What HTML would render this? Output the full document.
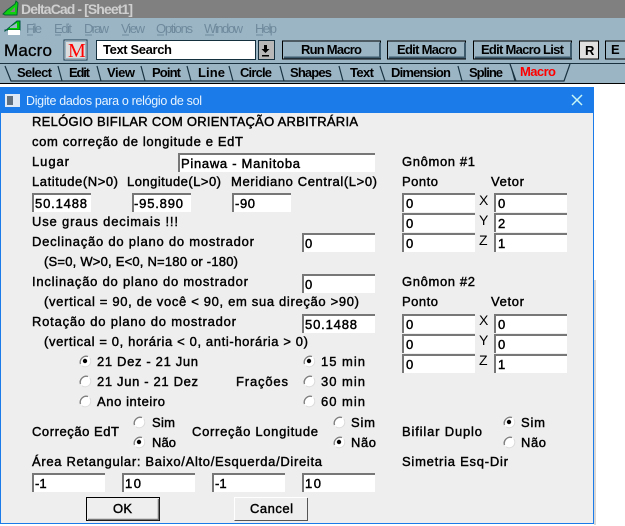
<!DOCTYPE html>
<html><head><meta charset="utf-8"><style>
html,body{margin:0;padding:0;background:#fff;width:625px;height:526px;overflow:hidden}
svg{display:block}
text{font-family:"Liberation Sans",sans-serif;font-size:13px;fill:#000;stroke:#000;stroke-width:.42;white-space:pre}
.n{stroke:none}
.m{fill:#6f8a9c;stroke:none;font-size:13px}
.b{font-weight:bold;stroke:none;font-size:13px}
.in{stroke-width:.45}
</style></head><body>
<svg width="625" height="526" viewBox="0 0 625 526" xmlns="http://www.w3.org/2000/svg">
<defs>
<g id="ri"><circle r="5.5" fill="#fff"/><path d="M-4.500 3A6 6 0 0 1 3-4.500" fill="none" stroke="#808080" stroke-width="1.400"/><path d="M-3 4.800A5.600 5.600 0 0 0 4.800-3" fill="none" stroke="#dcdcdc" stroke-width="1"/></g>
<g id="rc"><use href="#ri"/><circle r="2.200" fill="#000"/></g>
</defs>
<rect width="625" height="18" fill="#808080"/>
<rect y="18" width="625" height="65" fill="#9bb5c5"/>

<path d="M3 14L7 10L15 4L16 1L18 3L17 15H5z" fill="#0fd00f" stroke="#063" stroke-width="1"/>
<path d="M10 12L15 7V12z" fill="#808080"/>
<text x="21" y="14" textLength="112" class="b" style="fill:#cfcfcf;font-size:14px">DeltaCad - [Sheet1]</text>

<path d="M5 31L17 21H20V30H5z" fill="#0c0" stroke="#054" stroke-width="1"/>
<path d="M10 27L17 23V28H10z" fill="#9bb5c5"/>
<rect x="8" y="30" width="12" height="5" fill="#fff"/>
<text x="26" y="33" textLength="16" class="m">File</text>
<text x="54" y="33" textLength="18" class="m">Edit</text>
<text x="84" y="33" textLength="25" class="m">Draw</text>
<text x="121" y="33" textLength="24" class="m">View</text>
<text x="156" y="33" textLength="37" class="m">Options</text>
<text x="204" y="33" textLength="39" class="m">Window</text>
<text x="255" y="33" textLength="22" class="m">Help</text>
<path d="M27 35h6M55 35h6M85 35h7M122 35h7M157 35h7M205 35h9M256 35h7" stroke="#6f8a9c" stroke-width="1"/>

<text x="4" y="56" textLength="48" style="font-size:17px;stroke-width:.3">Macro</text>
<rect x="64" y="40" width="23" height="20" fill="#e8e8e8" stroke="#1a3c50" stroke-width="1"/>
<rect x="65.500" y="41.500" width="20" height="17" fill="#ddd" stroke="#9bb5c5" stroke-width="1"/>
<text x="68" y="57" textLength="16" style="font-family:'Liberation Serif',serif;font-size:20px;fill:#f00;stroke:none">M</text>
<rect x="96.500" y="40.500" width="159" height="19" fill="#fff" stroke="#14303f"/>
<text x="103" y="54" textLength="69" class="b">Text Search</text>
<rect x="258.500" y="40.500" width="16" height="19" fill="#b8b8b8" stroke="#14303f"/>
<path d="M264 45h3v4h2.500l-4 4-4-4H264zM262 55h7v1.500h-7z" fill="#000"/>

<g fill="#9bb5c5" stroke="#000">
<rect x="282.500" y="41" width="98" height="18"/>
<rect x="387.500" y="41" width="78" height="18"/>
<rect x="473.500" y="41" width="98" height="18"/>
<rect x="605.500" y="41" width="25" height="18"/>
</g>
<path d="M284 57.500H380V42.500M389 57.500H465V42.500M475 57.500H571V42.500" fill="none" stroke="#3d5a6c" stroke-width="2"/>
<rect x="579.500" y="41" width="19" height="18" fill="#e0e0e0" stroke="#000"/>
<text x="301" y="54" textLength="61" class="b">Run Macro</text>
<text x="397" y="54" textLength="60" class="b">Edit Macro</text>
<text x="481" y="54" textLength="83" class="b">Edit Macro List</text>
<text x="585" y="55" textLength="9" class="b">R</text>
<text x="611" y="54" textLength="8" class="b">E</text>

<rect y="63" width="625" height="1" fill="#1a3240"/>
<path d="M5 66L11 81H62L58 66M97 66L101 81H62M141 66L145 81H101M187 66L191 81H145M229 66L233 81H191M280 66L284 81H233M339 66L343 81H284M380 66L385 81H343M458 66L462 81H385M511 66L515 81H462" fill="none" stroke="#1a3240" stroke-width="1.200"/>
<path d="M510 64H570L564 81H516z" fill="#9bb5c5"/>
<path d="M510 64L516 81H564L570 64" fill="none" stroke="#1a3240" stroke-width="1.200"/>
<text x="17" y="77" textLength="35" class="b">Select</text>
<text x="69" y="77" textLength="21" class="b">Edit</text>
<text x="107" y="77" textLength="28" class="b">View</text>
<text x="152" y="77" textLength="29" class="b">Point</text>
<text x="198" y="77" textLength="27" class="b">Line</text>
<text x="240" y="77" textLength="32" class="b">Circle</text>
<text x="290" y="77" textLength="42" class="b">Shapes</text>
<text x="350" y="77" textLength="24" class="b">Text</text>
<text x="391" y="77" textLength="60" class="b">Dimension</text>
<text x="469" y="77" textLength="34" class="b">Spline</text>
<text x="520" y="76" textLength="36" class="b" style="fill:#f00">Macro</text>
<rect y="83" width="625" height="1" fill="#000"/>
<rect y="84" width="625" height="3" fill="#fff"/>

<rect x="594" y="280" width="2" height="245" fill="#d8d8d8"/>
<rect x="0" y="87" width="593.500" height="437" fill="#eee"/>
<rect x="0" y="87" width="594" height="26" fill="#1b7be8"/>
<path d="M.5 113V523.500H593.500V113" fill="none" stroke="#1b7be8"/>
<rect x="5" y="94" width="15" height="13" fill="#dfe9f5"/>
<rect x="7" y="96" width="6" height="9" fill="#60707f"/>
<text x="26" y="105" textLength="176" class="n" style="fill:#e8f4ff;font-size:12.500px">Digite dados para o relógio de sol</text>
<path d="M572 95L582 105M582 95L572 105" stroke="#c8f5f5" stroke-width="1.500"/>

<text x="32" y="126" textLength="326">RELÓGIO BIFILAR COM ORIENTAÇÃO ARBITRÁRIA</text>
<text x="32" y="146" textLength="211">com correção de longitude e EdT</text>
<text x="32" y="166" textLength="37">Lugar</text>
<text x="32" y="186" textLength="86">Latitude(N&gt;0)</text>
<text x="127" y="186" textLength="94">Longitude(L&gt;0)</text>
<text x="231" y="186" textLength="146">Meridiano Central(L&gt;0)</text>
<text x="32" y="226" textLength="146">Use graus decimais !!!</text>
<text x="32" y="246" textLength="222">Declinação do plano do mostrador</text>
<text x="44" y="266" textLength="194">(S=0, W&gt;0, E&lt;0, N=180 or -180)</text>
<text x="32" y="286" textLength="216">Inclinação do plano do mostrador</text>
<text x="44" y="306" textLength="315">(vertical = 90, de você &lt; 90, em sua direção &gt;90)</text>
<text x="32" y="326" textLength="204">Rotação do plano do mostrador</text>
<text x="44" y="346" textLength="264">(vertical = 0, horária &lt; 0, anti-horária &gt; 0)</text>
<text x="97" y="366" textLength="101">21 Dez - 21 Jun</text>
<text x="97" y="386" textLength="101">21 Jun - 21 Dez</text>
<text x="97" y="406" textLength="68">Ano inteiro</text>
<text x="236" y="386" textLength="52">Frações</text>
<text x="321" y="366" textLength="44">15 min</text>
<text x="321" y="386" textLength="44">30 min</text>
<text x="321" y="406" textLength="44">60 min</text>
<text x="32" y="436" textLength="87">Correção EdT</text>
<text x="152" y="427" textLength="23">Sim</text>
<text x="152" y="447" textLength="24">Não</text>
<text x="192" y="436" textLength="126">Correção Longitude</text>
<text x="351" y="427" textLength="24">Sim</text>
<text x="351" y="447" textLength="25">Não</text>
<text x="402" y="436" textLength="80">Bifilar Duplo</text>
<text x="521" y="427" textLength="24">Sim</text>
<text x="521" y="447" textLength="25">Não</text>
<text x="32" y="466" textLength="290">Área Retangular: Baixo/Alto/Esquerda/Direita</text>
<text x="402" y="466" textLength="106">Simetria Esq-Dir</text>
<text x="402" y="166" textLength="73">Gnômon #1</text>
<text x="402" y="186" textLength="36">Ponto</text>
<text x="491" y="186" textLength="33">Vetor</text>
<text x="402" y="286" textLength="73">Gnômon #2</text>
<text x="402" y="306" textLength="36">Ponto</text>
<text x="491" y="306" textLength="33">Vetor</text>
<text x="479" y="205" class="n" style="font-size:14px">X</text>
<text x="479" y="225" class="n" style="font-size:14px">Y</text>
<text x="479" y="245" class="n" style="font-size:14px">Z</text>
<text x="479" y="325" class="n" style="font-size:14px">X</text>
<text x="479" y="345" class="n" style="font-size:14px">Y</text>
<text x="479" y="365" class="n" style="font-size:14px">Z</text>

<use href="#rc" x="85" y="361"/><use href="#ri" x="85" y="381"/><use href="#ri" x="85" y="401"/>
<use href="#rc" x="309" y="361"/><use href="#ri" x="309" y="381"/><use href="#ri" x="309" y="401"/>
<use href="#ri" x="139" y="422"/><use href="#rc" x="139" y="442"/>
<use href="#ri" x="339" y="422"/><use href="#rc" x="339" y="442"/>
<use href="#rc" x="509" y="422"/><use href="#ri" x="509" y="442"/>

<g fill="#fff">
<rect x="32" y="193" width="59" height="19"/><rect x="132" y="193" width="59" height="19"/><rect x="232" y="193" width="59" height="19"/>
<rect x="178" y="153" width="197" height="19"/>
<rect x="302" y="233" width="73" height="19"/><rect x="302" y="274" width="73" height="19"/><rect x="302" y="314" width="73" height="19"/>
<rect x="402" y="193" width="73" height="19"/><rect x="402" y="213" width="73" height="19"/><rect x="402" y="233" width="73" height="19"/>
<rect x="494" y="193" width="73" height="19"/><rect x="494" y="213" width="73" height="19"/><rect x="494" y="233" width="73" height="19"/>
<rect x="402" y="314" width="73" height="19"/><rect x="402" y="334" width="73" height="19"/><rect x="402" y="354" width="73" height="19"/>
<rect x="494" y="314" width="73" height="19"/><rect x="494" y="334" width="73" height="19"/><rect x="494" y="354" width="73" height="19"/>
<rect x="32" y="473" width="73" height="19"/><rect x="122" y="473" width="73" height="19"/><rect x="212" y="473" width="73" height="19"/><rect x="302" y="473" width="73" height="19"/>
</g>
<path fill="none" stroke="#777" stroke-width="2" d="M33 212V194H91M133 212V194H191M233 212V194H291M179 172V154H375M303 252V234H375M303 293V275H375M303 333V315H375M403 212V194H475M403 232V214H475M403 252V234H475M495 212V194H567M495 232V214H567M495 252V234H567M403 333V315H475M403 353V335H475M403 373V355H475M495 333V315H567M495 353V335H567M495 373V355H567M33 492V474H105M123 492V474H195M213 492V474H285M303 492V474H375"/>

<text x="35" y="208" textLength="52" class="in">50.1488</text>
<text x="134" y="208" textLength="49" class="in">-95.890</text>
<text x="235" y="208" textLength="20" class="in">-90</text>
<text x="181" y="168" textLength="119" class="in">Pinawa - Manitoba</text>
<text x="305" y="248" class="in">0</text><text x="305" y="289" class="in">0</text><text x="305" y="329" textLength="52" class="in">50.1488</text>
<text x="406" y="208" class="in">0</text><text x="406" y="228" class="in">0</text><text x="406" y="248" class="in">0</text>
<text x="498" y="208" class="in">0</text><text x="498" y="228" class="in">2</text><text x="498" y="248" class="in">1</text>
<text x="406" y="329" class="in">0</text><text x="406" y="349" class="in">0</text><text x="406" y="369" class="in">0</text>
<text x="498" y="329" class="in">0</text><text x="498" y="349" class="in">0</text><text x="498" y="369" class="in">1</text>
<text x="35" y="488" class="in">-1</text><text x="125" y="488" textLength="16" class="in">10</text><text x="215" y="488" class="in">-1</text><text x="305" y="488" textLength="16" class="in">10</text>

<rect x="86.500" y="497.500" width="73" height="23" fill="#eee" stroke="#000"/>
<path d="M88 519.500H158.500V499" fill="none" stroke="#777" stroke-width="1.500"/>
<text x="113" y="513" textLength="19">OK</text>
<rect x="234" y="497" width="74" height="24" fill="#eee"/>
<path d="M234.500 520V497.500H307" fill="none" stroke="#fff"/>
<path d="M234.500 520.500H307.500V498" fill="none" stroke="#555"/>
<text x="250" y="513" textLength="43">Cancel</text>
</svg>
</body></html>
